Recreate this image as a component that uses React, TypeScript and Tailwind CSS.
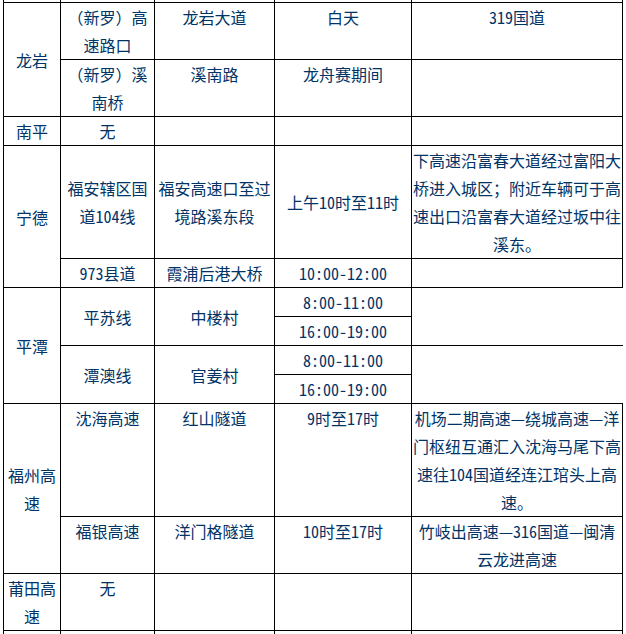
import React from "react";

type Cell = {
  lines?: string[];
  span?: string;
  align?: "top" | "middle";
  noRight?: boolean;
};

const rows: Cell[][] = [
  // stub row (table continues above)
  [{}, {}, {}, {}, {}],
  [
    { lines: ["龙岩"], span: "row-span-2", align: "middle" },
    { lines: ["（新罗）高", "速路口"] },
    { lines: ["龙岩大道"] },
    { lines: ["白天"] },
    { lines: ["319国道"] },
  ],
  [
    { lines: ["（新罗）溪", "南桥"] },
    { lines: ["溪南路"] },
    { lines: ["龙舟赛期间"] },
    {},
  ],
  [{ lines: ["南平"] }, { lines: ["无"] }, {}, {}, {}],
  [
    { lines: ["宁德"], span: "row-span-2", align: "middle" },
    { lines: ["福安辖区国", "道104线"], align: "middle" },
    { lines: ["福安高速口至过", "境路溪东段"], align: "middle" },
    { lines: ["上午10时至11时"], align: "middle" },
    {
      lines: [
        "下高速沿富春大道经过富阳大",
        "桥进入城区；附近车辆可于高",
        "速出口沿富春大道经过坂中往",
        "溪东。",
      ],
      align: "middle",
    },
  ],
  [{ lines: ["973县道"] }, { lines: ["霞浦后港大桥"] }, { lines: ["10:00-12:00"] }, {}],
  [
    { lines: ["平潭"], span: "row-span-4", align: "middle" },
    { lines: ["平苏线"], span: "row-span-2", align: "middle" },
    { lines: ["中楼村"], span: "row-span-2", align: "middle" },
    { lines: ["8:00-11:00"] },
    { span: "row-span-2", noRight: true },
  ],
  [{ lines: ["16:00-19:00"] }],
  [
    { lines: ["潭澳线"], span: "row-span-2", align: "middle" },
    { lines: ["官姜村"], span: "row-span-2", align: "middle" },
    { lines: ["8:00-11:00"] },
    { span: "row-span-2", noRight: true },
  ],
  [{ lines: ["16:00-19:00"] }],
  [
    { lines: ["福州高", "速"], span: "row-span-2", align: "middle" },
    { lines: ["沈海高速"] },
    { lines: ["红山隧道"] },
    { lines: ["9时至17时"] },
    {
      lines: [
        "机场二期高速—绕城高速—洋",
        "门枢纽互通汇入沈海马尾下高",
        "速往104国道经连江琯头上高",
        "速。",
      ],
    },
  ],
  [
    { lines: ["福银高速"] },
    { lines: ["洋门格隧道"] },
    { lines: ["10时至17时"] },
    { lines: ["竹岐出高速—316国道—闽清", "云龙进高速"] },
  ],
  [{ lines: ["莆田高", "速"] }, { lines: ["无"] }, {}, {}, {}],
];

export default function App() {
  return (
    <div className="w-[626px] h-[634px] bg-white overflow-hidden">
      <div
        className="ml-[3px] w-[620px] h-[634px] grid grid-cols-[57px_94px_120px_137px_211px] grid-rows-[3px_57px_57px_29px_113px_29px_29px_29px_29px_29px_113px_57px_57px_3px] border-l border-black text-[16px] leading-[28px] text-[#003366]"
        style={{
          fontFamily:
            '"Noto Sans Mono CJK SC", "Noto Sans CJK SC", "Noto Sans", sans-serif',
        }}
      >
        {rows.map((row, ri) =>
          row.map((c, ci) => (
            <div
              key={`${ri}-${ci}`}
              className={[
                "flex flex-col items-center text-center whitespace-nowrap border-b border-black overflow-hidden",
                c.noRight ? "" : "border-r",
                c.span ?? "",
                c.align === "middle" ? "justify-center" : "justify-start",
              ].join(" ")}
            >
              {c.lines?.map((l, li) => (
                <span key={li}>{l}</span>
              ))}
            </div>
          ))
        )}
        {[0, 1, 2, 3, 4].map((i) => (
          <div key={`tail-${i}`} className="border-r border-black" />
        ))}
      </div>
    </div>
  );
}
